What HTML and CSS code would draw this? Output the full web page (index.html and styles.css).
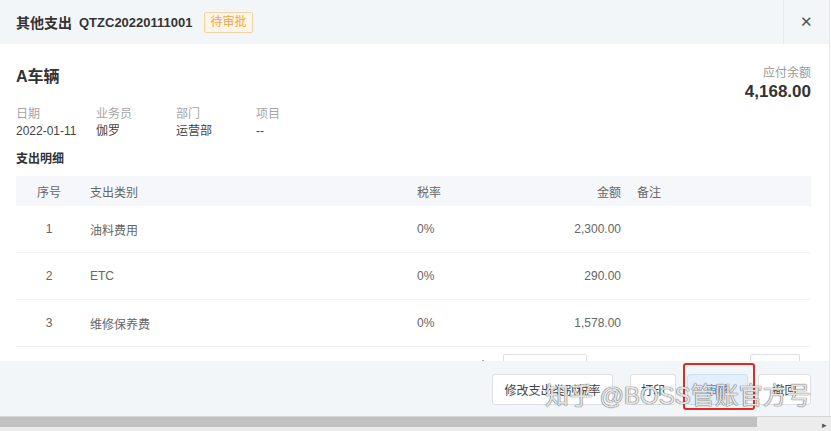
FILE: index.html
```html
<!DOCTYPE html>
<html lang="zh">
<head>
    <meta charset="UTF-8" />
    <title>其他支出</title>
    <link rel="stylesheet" href="styles.css">
</head>
<body>
    <div class="dialog">
        <!-- 标题栏 -->
        <div class="dialog-header">
            <span class="title">其他支出</span>
            <span class="code">QTZC20220111001</span>
            <span class="tag">待审批</span>
            <span class="close">&#x2715;</span>
        </div>

        <div class="dialog-body">
            <div class="head-row">
                <h2>A车辆</h2>
                <div class="balance">
                    <div class="balance-label">应付余额</div>
                    <div class="balance-value">4,168.00</div>
                </div>
            </div>

            <div class="info">
                <div class="info-item"><span class="lbl">日期</span><span class="val">2022-01-11</span></div>
                <div class="info-item"><span class="lbl">业务员</span><span class="val">伽罗</span></div>
                <div class="info-item"><span class="lbl">部门</span><span class="val">运营部</span></div>
                <div class="info-item"><span class="lbl">项目</span><span class="val">--</span></div>
            </div>

            <h3>支出明细</h3>

            <table>
                <thead>
                    <tr>
                        <th class="c-no">序号</th>
                        <th class="c-type">支出类别</th>
                        <th class="c-rate">税率</th>
                        <th class="c-amt">金额</th>
                        <th class="c-note">备注</th>
                    </tr>
                </thead>
                <tbody>
                    <tr><td class="c-no">1</td><td>油料费用</td><td>0%</td><td class="c-amt">2,300.00</td><td></td></tr>
                    <tr><td class="c-no">2</td><td>ETC</td><td>0%</td><td class="c-amt">290.00</td><td></td></tr>
                    <tr><td class="c-no">3</td><td>维修保养费</td><td>0%</td><td class="c-amt">1,578.00</td><td></td></tr>
                </tbody>
            </table>

            <!-- 分页，被底栏挡住大半 -->
            <div class="pager">
                <span class="dot"></span>
                <span class="pager-box wide"><span class="dot inner"></span></span>
                <span class="pager-box small"></span>
            </div>
        </div>

        <div class="dialog-footer">
            <button class="btn btn-wide">修改支出类别税率</button>
            <button class="btn btn-print">打印</button>
            <button class="btn btn-primary">审核</button>
            <button class="btn btn-back">撤回</button>
        </div>
    </div>

    <div class="scrollbar">
        <div class="thumb"></div>
        <span class="arrow">&#9656;</span>
    </div>

    <!-- 标注和水印 -->
    <div class="mark"></div>
    <div class="watermark">知乎 @BOSS管账官方号</div>
</body>
</html>
```

FILE: styles.css
```css
body {
    margin: 0;
    width: 831px;
    height: 431px;
    overflow: hidden;
    position: relative;
    font-family: "Liberation Sans", "Noto Sans CJK SC", Arial, sans-serif;
    color: #333;
    background: #fff;
}
.dialog {
    width: 829px;
    border-right: 1px solid #e6e8eb;
}
.dialog-header {
    height: 44px;
    background: #f3f6f9;
    display: flex;
    align-items: center;
    padding-left: 16px;
}
.title {
    font-size: 14px;
    font-weight: bold;
    margin-right: 7px;
}
.code {
    font-size: 13px;
    font-weight: bold;
}
.tag {
    margin-left: 12px;
    height: 19px;
    line-height: 19px;
    padding: 0 5px;
    font-size: 12px;
    color: #f0a63c;
    background: #fdf5e9;
    border: 1px solid #f3d3a1;
    border-radius: 2px;
}
.close {
    margin-left: auto;
    width: 45px;
    height: 44px;
    line-height: 44px;
    text-align: center;
    font-size: 15px;
    color: #555;
    border-left: 1px solid #e8ebee;
}
.dialog-body {
    height: 296px;
    padding: 21px 18px 0 16px;
    overflow: hidden;
}
.head-row {
    display: flex;
    justify-content: space-between;
    align-items: flex-start;
}
h2 {
    margin: 0;
    font-size: 16px;
    line-height: 24px;
}
.balance {
    text-align: right;
}
.balance-label {
    font-size: 12px;
    line-height: 16px;
    color: #999;
}
.balance-value {
    font-size: 17px;
    line-height: 22px;
    font-weight: bold;
}
.info {
    display: flex;
    margin-top: 3px;
}
.info-item {
    width: 80px;
    display: flex;
    flex-direction: column;
}
.lbl {
    font-size: 12px;
    line-height: 16px;
    color: #a5a5a5;
}
.val {
    font-size: 12px;
    line-height: 18px;
    color: #444;
}
h3 {
    margin: 10px 0 8px;
    font-size: 12px;
    line-height: 18px;
}
table {
    width: 795px;
    border-collapse: collapse;
    table-layout: fixed;
    font-size: 12px;
    color: #666;
}
th {
    height: 30px;
    background: #f5f7fa;
    font-weight: normal;
    text-align: left;
    padding: 0 8px;
}
td {
    height: 46px;
    padding: 0 8px;
    border-bottom: 1px solid #f0f1f3;
}
.c-no { width: 50px; text-align: center; }
.c-type { width: 311px; }
.c-rate { width: 64px; }
.c-amt { width: 124px; text-align: right; }
th.c-amt { text-align: right; }
.pager {
    display: flex;
    align-items: flex-start;
    margin-top: 7px;
}
.dot {
    width: 2px;
    height: 2px;
    margin: 6px 19px 0 466px;
    background: #aaa;
}
.dot.inner {
    display: block;
    margin: 6px 0 0 32px;
}
.pager-box {
    height: 28px;
    border: 1px solid #dcdfe6;
    border-radius: 2px;
    background: #fff;
}
.pager-box.wide {
    width: 82px;
}
.pager-box.small {
    width: 48px;
    margin-left: 163px;
}
.dialog-footer {
    height: 42px;
    background: #f3f6f9;
    display: flex;
    justify-content: flex-end;
    align-items: flex-start;
    padding: 13px 18px 0 0;
}
.btn {
    height: 31px;
    padding: 0 8px;
    font-family: inherit;
    font-size: 12px;
    color: #444;
    background: #fff;
    border: 1px solid #dcdfe6;
    border-radius: 3px;
}
.btn-wide { width: 121px; }
.btn-print { width: 46px; margin-left: 17px; }
.btn-primary {
    width: 61px;
    margin-left: 11px;
    color: #4a90e2;
    background: #e3f0fc;
    border-color: #c6e0f8;
}
.btn-back { width: 53px; margin-left: 10px; }
.scrollbar {
    height: 15px;
    background: #ececec;
    border-top: 1px solid #d6d6d6;
    display: flex;
    align-items: flex-start;
}
.thumb {
    width: 757px;
    height: 10px;
    background: #c1c1c1;
}
.arrow {
    margin-left: auto;
    margin-right: 4px;
    font-size: 9px;
    line-height: 16px;
    color: #555;
}
.mark {
    position: absolute;
    left: 683px;
    top: 363px;
    width: 68px;
    height: 43px;
    border: 2px solid #e32a22;
    border-radius: 3px;
}
.watermark {
    position: absolute;
    left: 545px;
    top: 381px;
    font-size: 24px;
    line-height: 30px;
    white-space: nowrap;
    color: rgba(255, 255, 255, 0.85);
    text-shadow: 0 0 1px #555, 0 0 1px #555;
}
```
